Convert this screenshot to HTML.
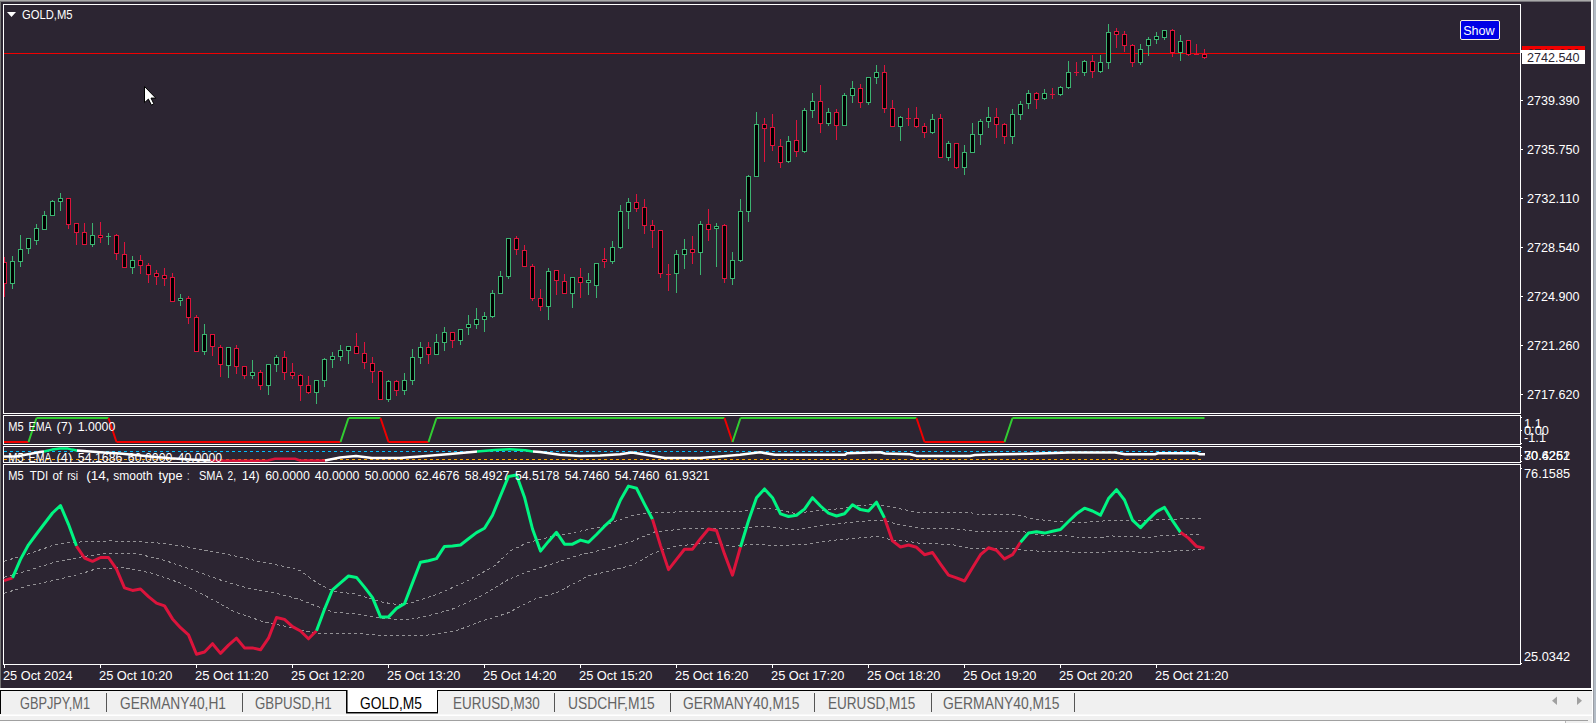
<!DOCTYPE html>
<html><head><meta charset="utf-8"><title>GOLD,M5</title>
<style>
html,body{margin:0;padding:0}
body{width:1596px;height:723px;overflow:hidden;background:#f0f0f0;position:relative;font-family:"Liberation Sans","DejaVu Sans",sans-serif}
.a{position:absolute}
#chart{left:0;top:0;width:1596px;height:688px;background:#2c2532}
svg{position:absolute;left:0;top:0}
svg text{font-family:"Liberation Sans","DejaVu Sans",sans-serif;font-size:12.75px;fill:#fff}
.tab{position:absolute;top:691px;height:23px;line-height:23px;font-size:16.2px;color:#636363;white-space:nowrap}
.tab span{display:inline-block;transform-origin:0 50%}
.sep{position:absolute;top:693px;width:1px;height:19px;background:#555}
</style></head><body>
<div id="chart" class="a"></div>

<svg width="1596" height="723" viewBox="0 0 1596 723">
<rect x="0" y="0" width="1593" height="1" fill="#a9a9a9"/>
<rect x="0" y="1" width="1591" height="1" fill="#77757a"/>
<rect x="0" y="1" width="1" height="690" fill="#727272"/>
<rect x="1591" y="0" width="2" height="723" fill="#fff"/>
<rect x="1593" y="0" width="1" height="723" fill="#9a9ea5"/>
<rect x="1594" y="0" width="2" height="723" fill="#b4bcc6"/>
<rect x="3" y="4" width="1518" height="1" fill="#fff"/>
<rect x="3" y="413" width="1518" height="1" fill="#fff"/>
<rect x="3" y="415" width="1518" height="1" fill="#fff"/>
<rect x="3" y="444" width="1518" height="1" fill="#fff"/>
<rect x="3" y="446" width="1518" height="1" fill="#fff"/>
<rect x="3" y="462" width="1518" height="1" fill="#fff"/>
<rect x="3" y="464" width="1518" height="1" fill="#fff"/>
<rect x="3" y="664" width="1518" height="1" fill="#fff"/>
<rect x="3" y="4" width="1" height="410" fill="#fff"/>
<rect x="3" y="415" width="1" height="30" fill="#fff"/>
<rect x="3" y="446" width="1" height="17" fill="#fff"/>
<rect x="3" y="464" width="1" height="201" fill="#fff"/>
<rect x="1520" y="4" width="1" height="410" fill="#fff"/>
<rect x="1520" y="415" width="1" height="30" fill="#fff"/>
<rect x="1520" y="446" width="1" height="17" fill="#fff"/>
<rect x="1520" y="464" width="1" height="201" fill="#fff"/>
<rect x="4" y="53" width="1516" height="1" fill="#f00000"/>
<g stroke-width="1" fill="#000">
<path clip-path="url(#cl)" stroke="#dc143c" d="M4.5 257V262M4.5 284V297" fill="none"/>
<rect clip-path="url(#cl)" stroke="#dc143c" x="2.5" y="262.5" width="4" height="21"/>
<path stroke="#3cb371" d="M12.5 256V261M12.5 284V289" fill="none"/>
<rect stroke="#3cb371" x="10.5" y="261.5" width="4" height="22"/>
<path stroke="#3cb371" d="M20.5 235V249M20.5 262V267" fill="none"/>
<rect stroke="#3cb371" x="18.5" y="249.5" width="4" height="12"/>
<path stroke="#3cb371" d="M28.5 238V238M28.5 249V254" fill="none"/>
<rect stroke="#3cb371" x="26.5" y="238.5" width="4" height="10"/>
<path stroke="#3cb371" d="M36.5 224V228M36.5 241V245" fill="none"/>
<rect stroke="#3cb371" x="34.5" y="228.5" width="4" height="12"/>
<path stroke="#3cb371" d="M44.5 211V215M44.5 230V230" fill="none"/>
<rect stroke="#3cb371" x="42.5" y="215.5" width="4" height="14"/>
<path stroke="#3cb371" d="M52.5 200V201M52.5 216V216" fill="none"/>
<rect stroke="#3cb371" x="50.5" y="201.5" width="4" height="14"/>
<path stroke="#3cb371" d="M60.5 193V198M60.5 202V211" fill="none"/>
<rect stroke="#3cb371" x="58.5" y="198.5" width="4" height="3"/>
<path stroke="#dc143c" d="M68.5 198V198M68.5 225V229" fill="none"/>
<rect stroke="#dc143c" x="66.5" y="198.5" width="4" height="26"/>
<path stroke="#dc143c" d="M76.5 223V223M76.5 233V245" fill="none"/>
<rect stroke="#dc143c" x="74.5" y="223.5" width="4" height="9"/>
<path stroke="#dc143c" d="M84.5 223V232M84.5 245V245" fill="none"/>
<rect stroke="#dc143c" x="82.5" y="232.5" width="4" height="12"/>
<path stroke="#3cb371" d="M92.5 223V235M92.5 245V247" fill="none"/>
<rect stroke="#3cb371" x="90.5" y="235.5" width="4" height="9"/>
<path stroke="#dc143c" d="M100.5 222V235M100.5 238V243" fill="none"/>
<rect stroke="#dc143c" x="98.5" y="235.5" width="4" height="2"/>
<path stroke="#3cb371" d="M108.5 233V236M108.5 237V245" fill="none"/>
<rect x="106.0" y="236" width="5" height="1" fill="#3cb371" stroke="none"/>
<path stroke="#dc143c" d="M116.5 234V235M116.5 254V260" fill="none"/>
<rect stroke="#dc143c" x="114.5" y="235.5" width="4" height="18"/>
<path stroke="#dc143c" d="M124.5 242V254M124.5 268V268" fill="none"/>
<rect stroke="#dc143c" x="122.5" y="254.5" width="4" height="13"/>
<path stroke="#3cb371" d="M132.5 256V260M132.5 268V274" fill="none"/>
<rect stroke="#3cb371" x="130.5" y="260.5" width="4" height="7"/>
<path stroke="#dc143c" d="M140.5 255V260M140.5 266V274" fill="none"/>
<rect stroke="#dc143c" x="138.5" y="260.5" width="4" height="5"/>
<path stroke="#dc143c" d="M148.5 263V265M148.5 275V283" fill="none"/>
<rect stroke="#dc143c" x="146.5" y="265.5" width="4" height="9"/>
<path stroke="#dc143c" d="M156.5 270V273M156.5 277V285" fill="none"/>
<rect stroke="#dc143c" x="154.5" y="273.5" width="4" height="3"/>
<path stroke="#dc143c" d="M164.5 268V275M164.5 279V286" fill="none"/>
<rect stroke="#dc143c" x="162.5" y="275.5" width="4" height="3"/>
<path stroke="#dc143c" d="M172.5 273V277M172.5 302V302" fill="none"/>
<rect stroke="#dc143c" x="170.5" y="277.5" width="4" height="24"/>
<path stroke="#3cb371" d="M180.5 294V298M180.5 301V306" fill="none"/>
<rect stroke="#3cb371" x="178.5" y="298.5" width="4" height="2"/>
<path stroke="#dc143c" d="M188.5 296V298M188.5 318V324" fill="none"/>
<rect stroke="#dc143c" x="186.5" y="298.5" width="4" height="19"/>
<path stroke="#dc143c" d="M196.5 315V317M196.5 352V352" fill="none"/>
<rect stroke="#dc143c" x="194.5" y="317.5" width="4" height="34"/>
<path stroke="#3cb371" d="M204.5 324V334M204.5 352V355" fill="none"/>
<rect stroke="#3cb371" x="202.5" y="334.5" width="4" height="17"/>
<path stroke="#dc143c" d="M212.5 334V334M212.5 347V356" fill="none"/>
<rect stroke="#dc143c" x="210.5" y="334.5" width="4" height="12"/>
<path stroke="#dc143c" d="M220.5 345V347M220.5 365V377" fill="none"/>
<rect stroke="#dc143c" x="218.5" y="347.5" width="4" height="17"/>
<path stroke="#3cb371" d="M228.5 347V347M228.5 366V378" fill="none"/>
<rect stroke="#3cb371" x="226.5" y="347.5" width="4" height="18"/>
<path stroke="#dc143c" d="M236.5 345V348M236.5 367V374" fill="none"/>
<rect stroke="#dc143c" x="234.5" y="348.5" width="4" height="18"/>
<path stroke="#dc143c" d="M244.5 366V366M244.5 376V379" fill="none"/>
<rect stroke="#dc143c" x="242.5" y="366.5" width="4" height="9"/>
<path stroke="#3cb371" d="M252.5 360V372M252.5 376V379" fill="none"/>
<rect stroke="#3cb371" x="250.5" y="372.5" width="4" height="3"/>
<path stroke="#dc143c" d="M260.5 370V372M260.5 386V390" fill="none"/>
<rect stroke="#dc143c" x="258.5" y="372.5" width="4" height="13"/>
<path stroke="#3cb371" d="M268.5 364V364M268.5 386V395" fill="none"/>
<rect stroke="#3cb371" x="266.5" y="364.5" width="4" height="21"/>
<path stroke="#3cb371" d="M276.5 355V357M276.5 365V372" fill="none"/>
<rect stroke="#3cb371" x="274.5" y="357.5" width="4" height="7"/>
<path stroke="#dc143c" d="M284.5 351V357M284.5 373V380" fill="none"/>
<rect stroke="#dc143c" x="282.5" y="357.5" width="4" height="15"/>
<path stroke="#dc143c" d="M292.5 363V372M292.5 376V379" fill="none"/>
<rect stroke="#dc143c" x="290.5" y="372.5" width="4" height="3"/>
<path stroke="#dc143c" d="M300.5 374V375M300.5 386V401" fill="none"/>
<rect stroke="#dc143c" x="298.5" y="375.5" width="4" height="10"/>
<path stroke="#dc143c" d="M308.5 376V385M308.5 393V394" fill="none"/>
<rect stroke="#dc143c" x="306.5" y="385.5" width="4" height="7"/>
<path stroke="#3cb371" d="M316.5 380V380M316.5 393V404" fill="none"/>
<rect stroke="#3cb371" x="314.5" y="380.5" width="4" height="12"/>
<path stroke="#3cb371" d="M324.5 358V359M324.5 381V387" fill="none"/>
<rect stroke="#3cb371" x="322.5" y="359.5" width="4" height="21"/>
<path stroke="#3cb371" d="M332.5 352V356M332.5 360V368" fill="none"/>
<rect stroke="#3cb371" x="330.5" y="356.5" width="4" height="3"/>
<path stroke="#3cb371" d="M340.5 345V350M340.5 357V361" fill="none"/>
<rect stroke="#3cb371" x="338.5" y="350.5" width="4" height="6"/>
<path stroke="#3cb371" d="M348.5 346V346M348.5 351V364" fill="none"/>
<rect stroke="#3cb371" x="346.5" y="346.5" width="4" height="4"/>
<path stroke="#dc143c" d="M356.5 333V346M356.5 354V354" fill="none"/>
<rect stroke="#dc143c" x="354.5" y="346.5" width="4" height="7"/>
<path stroke="#dc143c" d="M364.5 342V353M364.5 363V369" fill="none"/>
<rect stroke="#dc143c" x="362.5" y="353.5" width="4" height="9"/>
<path stroke="#dc143c" d="M372.5 357V363M372.5 372V383" fill="none"/>
<rect stroke="#dc143c" x="370.5" y="363.5" width="4" height="8"/>
<path stroke="#dc143c" d="M380.5 370V371M380.5 400V400" fill="none"/>
<rect stroke="#dc143c" x="378.5" y="371.5" width="4" height="28"/>
<path stroke="#3cb371" d="M388.5 380V381M388.5 400V402" fill="none"/>
<rect stroke="#3cb371" x="386.5" y="381.5" width="4" height="18"/>
<path stroke="#dc143c" d="M396.5 380V381M396.5 391V396" fill="none"/>
<rect stroke="#dc143c" x="394.5" y="381.5" width="4" height="9"/>
<path stroke="#3cb371" d="M404.5 373V380M404.5 391V395" fill="none"/>
<rect stroke="#3cb371" x="402.5" y="380.5" width="4" height="10"/>
<path stroke="#3cb371" d="M412.5 349V357M412.5 381V385" fill="none"/>
<rect stroke="#3cb371" x="410.5" y="357.5" width="4" height="23"/>
<path stroke="#3cb371" d="M420.5 342V347M420.5 358V364" fill="none"/>
<rect stroke="#3cb371" x="418.5" y="347.5" width="4" height="10"/>
<path stroke="#dc143c" d="M428.5 342V347M428.5 355V364" fill="none"/>
<rect stroke="#dc143c" x="426.5" y="347.5" width="4" height="7"/>
<path stroke="#3cb371" d="M436.5 334V342M436.5 355V355" fill="none"/>
<rect stroke="#3cb371" x="434.5" y="342.5" width="4" height="12"/>
<path stroke="#3cb371" d="M444.5 327V332M444.5 343V351" fill="none"/>
<rect stroke="#3cb371" x="442.5" y="332.5" width="4" height="10"/>
<path stroke="#dc143c" d="M452.5 332V332M452.5 341V348" fill="none"/>
<rect stroke="#dc143c" x="450.5" y="332.5" width="4" height="8"/>
<path stroke="#3cb371" d="M460.5 329V329M460.5 341V345" fill="none"/>
<rect stroke="#3cb371" x="458.5" y="329.5" width="4" height="11"/>
<path stroke="#3cb371" d="M468.5 315V324M468.5 328V335" fill="none"/>
<rect stroke="#3cb371" x="466.5" y="324.5" width="4" height="3"/>
<path stroke="#3cb371" d="M476.5 308V319M476.5 325V329" fill="none"/>
<rect stroke="#3cb371" x="474.5" y="319.5" width="4" height="5"/>
<path stroke="#3cb371" d="M484.5 312V316M484.5 320V332" fill="none"/>
<rect stroke="#3cb371" x="482.5" y="316.5" width="4" height="3"/>
<path stroke="#3cb371" d="M492.5 290V293M492.5 317V318" fill="none"/>
<rect stroke="#3cb371" x="490.5" y="293.5" width="4" height="23"/>
<path stroke="#3cb371" d="M500.5 271V276M500.5 294V294" fill="none"/>
<rect stroke="#3cb371" x="498.5" y="276.5" width="4" height="17"/>
<path stroke="#3cb371" d="M508.5 238V238M508.5 277V279" fill="none"/>
<rect stroke="#3cb371" x="506.5" y="238.5" width="4" height="38"/>
<path stroke="#dc143c" d="M516.5 236V238M516.5 250V255" fill="none"/>
<rect stroke="#dc143c" x="514.5" y="238.5" width="4" height="11"/>
<path stroke="#dc143c" d="M524.5 245V250M524.5 267V267" fill="none"/>
<rect stroke="#dc143c" x="522.5" y="250.5" width="4" height="16"/>
<path stroke="#dc143c" d="M532.5 264V266M532.5 299V301" fill="none"/>
<rect stroke="#dc143c" x="530.5" y="266.5" width="4" height="32"/>
<path stroke="#dc143c" d="M540.5 289V298M540.5 307V311" fill="none"/>
<rect stroke="#dc143c" x="538.5" y="298.5" width="4" height="8"/>
<path stroke="#3cb371" d="M548.5 268V271M548.5 307V320" fill="none"/>
<rect stroke="#3cb371" x="546.5" y="271.5" width="4" height="35"/>
<path stroke="#dc143c" d="M556.5 270V270M556.5 281V295" fill="none"/>
<rect stroke="#dc143c" x="554.5" y="270.5" width="4" height="10"/>
<path stroke="#dc143c" d="M564.5 274V281M564.5 294V294" fill="none"/>
<rect stroke="#dc143c" x="562.5" y="281.5" width="4" height="12"/>
<path stroke="#3cb371" d="M572.5 277V277M572.5 294V308" fill="none"/>
<rect stroke="#3cb371" x="570.5" y="277.5" width="4" height="16"/>
<path stroke="#dc143c" d="M580.5 268V277M580.5 283V298" fill="none"/>
<rect stroke="#dc143c" x="578.5" y="277.5" width="4" height="5"/>
<path stroke="#3cb371" d="M588.5 273V280M588.5 283V295" fill="none"/>
<rect stroke="#3cb371" x="586.5" y="280.5" width="4" height="2"/>
<path stroke="#3cb371" d="M596.5 263V263M596.5 286V298" fill="none"/>
<rect stroke="#3cb371" x="594.5" y="263.5" width="4" height="22"/>
<path stroke="#dc143c" d="M604.5 248V259M604.5 262V268" fill="none"/>
<rect stroke="#dc143c" x="602.5" y="259.5" width="4" height="2"/>
<path stroke="#3cb371" d="M612.5 241V247M612.5 262V264" fill="none"/>
<rect stroke="#3cb371" x="610.5" y="247.5" width="4" height="14"/>
<path stroke="#3cb371" d="M620.5 205V211M620.5 248V249" fill="none"/>
<rect stroke="#3cb371" x="618.5" y="211.5" width="4" height="36"/>
<path stroke="#3cb371" d="M628.5 198V202M628.5 212V229" fill="none"/>
<rect stroke="#3cb371" x="626.5" y="202.5" width="4" height="9"/>
<path stroke="#dc143c" d="M636.5 194V202M636.5 209V212" fill="none"/>
<rect stroke="#dc143c" x="634.5" y="202.5" width="4" height="6"/>
<path stroke="#dc143c" d="M644.5 199V207M644.5 226V234" fill="none"/>
<rect stroke="#dc143c" x="642.5" y="207.5" width="4" height="18"/>
<path stroke="#dc143c" d="M652.5 220V225M652.5 231V248" fill="none"/>
<rect stroke="#dc143c" x="650.5" y="225.5" width="4" height="5"/>
<path stroke="#dc143c" d="M660.5 230V230M660.5 274V278" fill="none"/>
<rect stroke="#dc143c" x="658.5" y="230.5" width="4" height="43"/>
<path stroke="#dc143c" d="M668.5 264V274M668.5 275V291" fill="none"/>
<rect x="666.0" y="274" width="5" height="1" fill="#dc143c" stroke="none"/>
<path stroke="#3cb371" d="M676.5 250V254M676.5 274V293" fill="none"/>
<rect stroke="#3cb371" x="674.5" y="254.5" width="4" height="19"/>
<path stroke="#3cb371" d="M684.5 239V249M684.5 255V269" fill="none"/>
<rect stroke="#3cb371" x="682.5" y="249.5" width="4" height="5"/>
<path stroke="#dc143c" d="M692.5 236V249M692.5 253V264" fill="none"/>
<rect stroke="#dc143c" x="690.5" y="249.5" width="4" height="3"/>
<path stroke="#3cb371" d="M700.5 221V224M700.5 253V275" fill="none"/>
<rect stroke="#3cb371" x="698.5" y="224.5" width="4" height="28"/>
<path stroke="#dc143c" d="M708.5 209V224M708.5 230V241" fill="none"/>
<rect stroke="#dc143c" x="706.5" y="224.5" width="4" height="5"/>
<path stroke="#3cb371" d="M716.5 223V226M716.5 229V267" fill="none"/>
<rect stroke="#3cb371" x="714.5" y="226.5" width="4" height="2"/>
<path stroke="#dc143c" d="M724.5 224V225M724.5 279V283" fill="none"/>
<rect stroke="#dc143c" x="722.5" y="225.5" width="4" height="53"/>
<path stroke="#3cb371" d="M732.5 252V260M732.5 279V285" fill="none"/>
<rect stroke="#3cb371" x="730.5" y="260.5" width="4" height="18"/>
<path stroke="#3cb371" d="M740.5 199V211M740.5 261V262" fill="none"/>
<rect stroke="#3cb371" x="738.5" y="211.5" width="4" height="49"/>
<path stroke="#3cb371" d="M748.5 175V176M748.5 212V222" fill="none"/>
<rect stroke="#3cb371" x="746.5" y="176.5" width="4" height="35"/>
<path stroke="#3cb371" d="M756.5 112V124M756.5 177V177" fill="none"/>
<rect stroke="#3cb371" x="754.5" y="124.5" width="4" height="52"/>
<path stroke="#dc143c" d="M764.5 118V124M764.5 129V162" fill="none"/>
<rect stroke="#dc143c" x="762.5" y="124.5" width="4" height="4"/>
<path stroke="#dc143c" d="M772.5 114V127M772.5 146V151" fill="none"/>
<rect stroke="#dc143c" x="770.5" y="127.5" width="4" height="18"/>
<path stroke="#dc143c" d="M780.5 139V146M780.5 163V168" fill="none"/>
<rect stroke="#dc143c" x="778.5" y="146.5" width="4" height="16"/>
<path stroke="#3cb371" d="M788.5 136V141M788.5 162V163" fill="none"/>
<rect stroke="#3cb371" x="786.5" y="141.5" width="4" height="20"/>
<path stroke="#dc143c" d="M796.5 120V140M796.5 152V157" fill="none"/>
<rect stroke="#dc143c" x="794.5" y="140.5" width="4" height="11"/>
<path stroke="#3cb371" d="M804.5 108V110M804.5 152V153" fill="none"/>
<rect stroke="#3cb371" x="802.5" y="110.5" width="4" height="41"/>
<path stroke="#3cb371" d="M812.5 93V101M812.5 111V118" fill="none"/>
<rect stroke="#3cb371" x="810.5" y="101.5" width="4" height="9"/>
<path stroke="#dc143c" d="M820.5 85V101M820.5 124V133" fill="none"/>
<rect stroke="#dc143c" x="818.5" y="101.5" width="4" height="22"/>
<path stroke="#3cb371" d="M828.5 108V112M828.5 124V126" fill="none"/>
<rect stroke="#3cb371" x="826.5" y="112.5" width="4" height="11"/>
<path stroke="#dc143c" d="M836.5 109V112M836.5 126V140" fill="none"/>
<rect stroke="#dc143c" x="834.5" y="112.5" width="4" height="13"/>
<path stroke="#3cb371" d="M844.5 93V95M844.5 126V126" fill="none"/>
<rect stroke="#3cb371" x="842.5" y="95.5" width="4" height="30"/>
<path stroke="#3cb371" d="M852.5 81V88M852.5 96V103" fill="none"/>
<rect stroke="#3cb371" x="850.5" y="88.5" width="4" height="7"/>
<path stroke="#dc143c" d="M860.5 84V88M860.5 103V108" fill="none"/>
<rect stroke="#dc143c" x="858.5" y="88.5" width="4" height="14"/>
<path stroke="#3cb371" d="M868.5 77V77M868.5 103V105" fill="none"/>
<rect stroke="#3cb371" x="866.5" y="77.5" width="4" height="25"/>
<path stroke="#3cb371" d="M876.5 65V72M876.5 78V84" fill="none"/>
<rect stroke="#3cb371" x="874.5" y="72.5" width="4" height="5"/>
<path stroke="#dc143c" d="M884.5 65V72M884.5 109V113" fill="none"/>
<rect stroke="#dc143c" x="882.5" y="72.5" width="4" height="36"/>
<path stroke="#dc143c" d="M892.5 100V108M892.5 127V127" fill="none"/>
<rect stroke="#dc143c" x="890.5" y="108.5" width="4" height="18"/>
<path stroke="#3cb371" d="M900.5 116V117M900.5 127V141" fill="none"/>
<rect stroke="#3cb371" x="898.5" y="117.5" width="4" height="9"/>
<path stroke="#dc143c" d="M908.5 108V118M908.5 119V126" fill="none"/>
<rect x="906.0" y="118" width="5" height="1" fill="#dc143c" stroke="none"/>
<path stroke="#dc143c" d="M916.5 107V118M916.5 127V128" fill="none"/>
<rect stroke="#dc143c" x="914.5" y="118.5" width="4" height="8"/>
<path stroke="#dc143c" d="M924.5 123V126M924.5 133V138" fill="none"/>
<rect stroke="#dc143c" x="922.5" y="126.5" width="4" height="6"/>
<path stroke="#3cb371" d="M932.5 114V119M932.5 133V134" fill="none"/>
<rect stroke="#3cb371" x="930.5" y="119.5" width="4" height="13"/>
<path stroke="#dc143c" d="M940.5 114V118M940.5 158V158" fill="none"/>
<rect stroke="#dc143c" x="938.5" y="118.5" width="4" height="39"/>
<path stroke="#3cb371" d="M948.5 141V143M948.5 158V161" fill="none"/>
<rect stroke="#3cb371" x="946.5" y="143.5" width="4" height="14"/>
<path stroke="#dc143c" d="M956.5 143V143M956.5 168V169" fill="none"/>
<rect stroke="#dc143c" x="954.5" y="143.5" width="4" height="24"/>
<path stroke="#3cb371" d="M964.5 145V152M964.5 168V175" fill="none"/>
<rect stroke="#3cb371" x="962.5" y="152.5" width="4" height="15"/>
<path stroke="#3cb371" d="M972.5 123V134M972.5 153V153" fill="none"/>
<rect stroke="#3cb371" x="970.5" y="134.5" width="4" height="18"/>
<path stroke="#3cb371" d="M980.5 119V121M980.5 135V145" fill="none"/>
<rect stroke="#3cb371" x="978.5" y="121.5" width="4" height="13"/>
<path stroke="#3cb371" d="M988.5 107V117M988.5 122V128" fill="none"/>
<rect stroke="#3cb371" x="986.5" y="117.5" width="4" height="4"/>
<path stroke="#dc143c" d="M996.5 108V117M996.5 125V138" fill="none"/>
<rect stroke="#dc143c" x="994.5" y="117.5" width="4" height="7"/>
<path stroke="#dc143c" d="M1004.5 123V124M1004.5 137V144" fill="none"/>
<rect stroke="#dc143c" x="1002.5" y="124.5" width="4" height="12"/>
<path stroke="#3cb371" d="M1012.5 109V114M1012.5 137V144" fill="none"/>
<rect stroke="#3cb371" x="1010.5" y="114.5" width="4" height="22"/>
<path stroke="#3cb371" d="M1020.5 101V104M1020.5 115V120" fill="none"/>
<rect stroke="#3cb371" x="1018.5" y="104.5" width="4" height="10"/>
<path stroke="#3cb371" d="M1028.5 90V93M1028.5 104V109" fill="none"/>
<rect stroke="#3cb371" x="1026.5" y="93.5" width="4" height="10"/>
<path stroke="#dc143c" d="M1036.5 92V93M1036.5 100V109" fill="none"/>
<rect stroke="#dc143c" x="1034.5" y="93.5" width="4" height="6"/>
<path stroke="#3cb371" d="M1044.5 89V93M1044.5 99V100" fill="none"/>
<rect stroke="#3cb371" x="1042.5" y="93.5" width="4" height="5"/>
<path stroke="#dc143c" d="M1052.5 88V94M1052.5 95V99" fill="none"/>
<rect x="1050.0" y="94" width="5" height="1" fill="#dc143c" stroke="none"/>
<path stroke="#3cb371" d="M1060.5 86V87M1060.5 95V96" fill="none"/>
<rect stroke="#3cb371" x="1058.5" y="87.5" width="4" height="7"/>
<path stroke="#3cb371" d="M1068.5 61V72M1068.5 88V89" fill="none"/>
<rect stroke="#3cb371" x="1066.5" y="72.5" width="4" height="15"/>
<path stroke="#dc143c" d="M1076.5 62V72M1076.5 73V76" fill="none"/>
<rect x="1074.0" y="72" width="5" height="1" fill="#dc143c" stroke="none"/>
<path stroke="#3cb371" d="M1084.5 60V61M1084.5 73V76" fill="none"/>
<rect stroke="#3cb371" x="1082.5" y="61.5" width="4" height="11"/>
<path stroke="#dc143c" d="M1092.5 55V61M1092.5 72V78" fill="none"/>
<rect stroke="#dc143c" x="1090.5" y="61.5" width="4" height="10"/>
<path stroke="#3cb371" d="M1100.5 55V62M1100.5 72V73" fill="none"/>
<rect stroke="#3cb371" x="1098.5" y="62.5" width="4" height="9"/>
<path stroke="#3cb371" d="M1108.5 24V32M1108.5 63V69" fill="none"/>
<rect stroke="#3cb371" x="1106.5" y="32.5" width="4" height="30"/>
<path stroke="#dc143c" d="M1116.5 28V31M1116.5 35V48" fill="none"/>
<rect stroke="#dc143c" x="1114.5" y="31.5" width="4" height="3"/>
<path stroke="#dc143c" d="M1124.5 31V34M1124.5 46V52" fill="none"/>
<rect stroke="#dc143c" x="1122.5" y="34.5" width="4" height="11"/>
<path stroke="#dc143c" d="M1132.5 44V45M1132.5 63V67" fill="none"/>
<rect stroke="#dc143c" x="1130.5" y="45.5" width="4" height="17"/>
<path stroke="#3cb371" d="M1140.5 44V49M1140.5 63V65" fill="none"/>
<rect stroke="#3cb371" x="1138.5" y="49.5" width="4" height="13"/>
<path stroke="#3cb371" d="M1148.5 37V39M1148.5 46V56" fill="none"/>
<rect stroke="#3cb371" x="1146.5" y="39.5" width="4" height="6"/>
<path stroke="#3cb371" d="M1156.5 32V36M1156.5 40V44" fill="none"/>
<rect stroke="#3cb371" x="1154.5" y="36.5" width="4" height="3"/>
<path stroke="#3cb371" d="M1164.5 30V30M1164.5 38V40" fill="none"/>
<rect stroke="#3cb371" x="1162.5" y="30.5" width="4" height="7"/>
<path stroke="#dc143c" d="M1172.5 29V30M1172.5 53V57" fill="none"/>
<rect stroke="#dc143c" x="1170.5" y="30.5" width="4" height="22"/>
<path stroke="#3cb371" d="M1180.5 35V41M1180.5 53V61" fill="none"/>
<rect stroke="#3cb371" x="1178.5" y="41.5" width="4" height="11"/>
<path stroke="#dc143c" d="M1188.5 40V40M1188.5 55V56" fill="none"/>
<rect stroke="#dc143c" x="1186.5" y="40.5" width="4" height="14"/>
<path stroke="#dc143c" d="M1196.5 44V54M1196.5 55V55" fill="none"/>
<rect x="1194.0" y="54" width="5" height="1" fill="#dc143c" stroke="none"/>
<path stroke="#dc143c" d="M1204.5 49V54M1204.5 58V59" fill="none"/>
<rect stroke="#dc143c" x="1202.5" y="54.5" width="4" height="3"/>
</g>
<defs><clipPath id="cl"><rect x="4" y="5" width="1516" height="408"/></clipPath></defs>
<path d="M4 442H28.5" stroke="#f00000" stroke-width="2" fill="none"/>
<path d="M28.5 442L36.5 418" stroke="#32cd32" stroke-width="2" fill="none"/>
<path d="M36.5 418H108.5" stroke="#32cd32" stroke-width="2" fill="none"/>
<path d="M108.5 418L116.5 442" stroke="#f00000" stroke-width="2" fill="none"/>
<path d="M116.5 442H340.5" stroke="#f00000" stroke-width="2" fill="none"/>
<path d="M340.5 442L348.5 418" stroke="#32cd32" stroke-width="2" fill="none"/>
<path d="M348.5 418H380.5" stroke="#32cd32" stroke-width="2" fill="none"/>
<path d="M380.5 418L388.5 442" stroke="#f00000" stroke-width="2" fill="none"/>
<path d="M388.5 442H428.5" stroke="#f00000" stroke-width="2" fill="none"/>
<path d="M428.5 442L436.5 418" stroke="#32cd32" stroke-width="2" fill="none"/>
<path d="M436.5 418H724.5" stroke="#32cd32" stroke-width="2" fill="none"/>
<path d="M724.5 418L732.5 442" stroke="#f00000" stroke-width="2" fill="none"/>
<path d="M732.5 442L740.5 418" stroke="#32cd32" stroke-width="2" fill="none"/>
<path d="M740.5 418H916.5" stroke="#32cd32" stroke-width="2" fill="none"/>
<path d="M916.5 418L924.5 442" stroke="#f00000" stroke-width="2" fill="none"/>
<path d="M924.5 442H1004.5" stroke="#f00000" stroke-width="2" fill="none"/>
<path d="M1004.5 442L1012.5 418" stroke="#32cd32" stroke-width="2" fill="none"/>
<path d="M1012.5 418H1204.5" stroke="#32cd32" stroke-width="2" fill="none"/>
<path d="M4 451.5H1202" stroke="#00bfff" stroke-width="1" stroke-dasharray="3 3" fill="none"/>
<path d="M4 459.5H1202" stroke="#ffa500" stroke-width="1" stroke-dasharray="3 3" fill="none"/>
<path d="M4.0 456.5 L16.0 456.5 L24.0 455.0 L32.0 453.5 L40.0 452.0 L44.0 451.5" stroke="#fff" stroke-width="2.5" fill="none" stroke-linejoin="round"/>
<path d="M44.0 451.5 L52.0 449.6 L60.0 448.6 L68.0 448.6 L72.0 449.6 L77.0 450.5" stroke="#00f582" stroke-width="2.5" fill="none" stroke-linejoin="round"/>
<path d="M77.0 450.5 L100.0 452.3 L120.0 453.6 L150.0 456.5 L170.0 458.3 L190.0 459.6 L210.0 460.5" stroke="#fff" stroke-width="2.5" fill="none" stroke-linejoin="round"/>
<path d="M210.0 460.5 L250.0 460.8 L268.0 460.5 L275.0 458.8 L295.0 458.8 L300.0 460.5 L325.0 460.5" stroke="#dc143c" stroke-width="2.5" fill="none" stroke-linejoin="round"/>
<path d="M325.0 460.5 L340.0 457.6 L356.0 456.0 L372.0 458.0 L400.0 458.0 L420.0 456.4 L450.0 453.9 L475.0 451.7 L477.0 451.5" stroke="#fff" stroke-width="2.5" fill="none" stroke-linejoin="round"/>
<path d="M477.0 451.5 L495.0 450.0 L510.0 449.2 L525.0 450.2 L533.0 451.5" stroke="#00f582" stroke-width="2.5" fill="none" stroke-linejoin="round"/>
<path d="M533.0 451.5 L540.0 452.0 L560.0 454.8 L580.0 456.0 L600.0 455.5 L620.0 454.2 L632.0 452.6 L650.0 455.4 L665.0 458.0 L700.0 458.0 L720.0 456.4 L740.0 454.8 L760.0 452.3 L775.0 454.8 L800.0 454.8 L845.0 454.8 L847.0 453.2 L880.0 452.3 L885.0 453.5 L910.0 454.2 L917.0 456.0 L970.0 456.0 L975.0 455.0 L990.0 454.5 L1030.0 453.7 L1070.0 452.6 L1115.0 452.6 L1125.0 454.2 L1155.0 454.2 L1158.0 453.2 L1197.0 453.2 L1200.0 454.2 L1205.0 454.2" stroke="#fff" stroke-width="2.5" fill="none" stroke-linejoin="round"/>
<path d="M4.0 561.3 L28.0 553.9 L55.0 544.8 L72.0 542.3 L110.0 540.9 L152.0 542.3 L180.0 545.6 L221.0 553.0 L263.0 562.2 L290.0 567.7 L300.0 570.5 L317.0 582.9 L333.0 591.2 L355.0 594.0 L383.0 602.3 L397.0 604.5 L411.0 602.8 L438.0 594.0 L466.0 581.5 L494.0 566.3 L510.0 551.1 L527.0 542.8 L549.0 537.3 L577.0 531.8 L600.0 527.1 L617.0 520.7 L633.0 515.2 L653.0 512.4 L697.0 511.6 L738.0 511.6 L755.0 508.8 L771.0 508.2 L794.0 513.2 L816.0 511.0 L838.0 508.8 L860.0 505.5 L877.0 504.1 L890.0 506.9 L900.0 508.8 L917.0 512.4 L969.0 512.4 L980.0 514.6 L1016.0 514.6 L1033.0 518.8 L1055.0 521.5 L1080.0 522.6 L1107.0 520.7 L1149.0 520.7 L1163.0 519.3 L1201.0 518.5" stroke="#939195" stroke-width="1" fill="none" stroke-linejoin="round" stroke-dasharray="3 3" shape-rendering="crispEdges"/>
<path d="M4.0 577.4 L28.0 570.5 L55.0 562.2 L83.0 556.6 L110.0 553.0 L138.0 553.9 L166.0 560.8 L194.0 570.5 L221.0 580.2 L249.0 588.4 L277.0 593.4 L300.0 599.5 L317.0 606.4 L333.0 612.0 L355.0 613.9 L383.0 618.3 L405.0 620.2 L424.0 616.9 L452.0 609.2 L480.0 596.7 L507.0 580.2 L527.0 571.9 L549.0 564.9 L577.0 555.8 L600.0 550.3 L617.0 545.6 L633.0 540.9 L655.0 531.8 L683.0 529.0 L711.0 528.2 L738.0 528.2 L766.0 526.2 L794.0 529.8 L821.0 525.4 L849.0 522.6 L877.0 520.1 L890.0 522.1 L900.0 524.8 L922.0 528.2 L950.0 528.2 L980.0 531.8 L1024.0 531.8 L1044.0 535.9 L1066.0 535.9 L1080.0 537.3 L1102.0 537.3 L1110.0 535.9 L1149.0 537.3 L1163.0 535.3 L1201.0 534.5" stroke="#939195" stroke-width="1" fill="none" stroke-linejoin="round" stroke-dasharray="3 3" shape-rendering="crispEdges"/>
<path d="M4.0 593.4 L28.0 585.7 L55.0 580.2 L83.0 573.2 L97.0 568.5 L124.0 567.7 L152.0 573.2 L180.0 582.9 L207.0 596.7 L235.0 612.0 L263.0 621.6 L290.0 627.2 L300.0 629.9 L317.0 633.2 L355.0 633.2 L383.0 635.5 L424.0 635.5 L455.0 631.3 L480.0 621.6 L507.0 613.3 L535.0 599.0 L557.0 592.6 L588.0 576.0 L600.0 573.2 L617.0 569.1 L633.0 564.9 L655.0 552.5 L675.0 546.4 L711.0 542.3 L733.0 546.4 L752.0 544.2 L780.0 545.6 L807.0 544.2 L835.0 540.1 L877.0 536.5 L893.0 540.1 L900.0 540.1 L922.0 543.6 L950.0 544.2 L969.0 548.3 L1011.0 548.3 L1024.0 550.6 L1066.0 551.9 L1102.0 552.5 L1110.0 551.1 L1149.0 552.5 L1177.0 550.6 L1201.0 549.7" stroke="#939195" stroke-width="1" fill="none" stroke-linejoin="round" stroke-dasharray="3 3" shape-rendering="crispEdges"/>
<path d="M4.0 580.7 L12.5 577.9" stroke="#dc143c" stroke-width="3" fill="none" stroke-linejoin="round"/>
<path d="M12.5 577.9 L20.5 559.4 L28.5 544.8 L36.5 534.0 L44.5 523.5 L52.5 513.0 L60.5 505.5 L68.5 524.3 L76.5 546.1" stroke="#00f582" stroke-width="3" fill="none" stroke-linejoin="round"/>
<path d="M76.5 546.1 L84.5 558.0 L92.5 561.3 L100.5 557.5 L108.5 557.5 L116.5 569.1 L124.5 587.9 L132.5 590.4 L140.5 589.0 L148.5 596.7 L156.5 603.1 L164.5 605.9 L172.5 618.9 L180.5 627.7 L188.5 634.9 L196.5 654.3 L204.5 652.0 L212.5 643.7 L220.5 653.4 L228.5 645.1 L236.5 638.2 L244.5 647.9 L252.5 647.9 L260.5 649.8 L268.5 638.2 L276.5 617.5 L284.5 619.4 L292.5 626.6 L300.5 631.0 L308.5 638.8 L316.5 630.8" stroke="#dc143c" stroke-width="3" fill="none" stroke-linejoin="round"/>
<path d="M316.5 630.8 L324.5 609.2 L332.5 589.8 L340.5 582.9 L348.5 576.0 L356.5 577.4 L364.5 587.1 L372.5 597.6 L380.5 616.9 L388.5 616.9 L396.5 608.4 L404.5 603.7 L412.5 582.9 L420.5 562.2 L428.5 560.8 L436.5 558.6 L444.5 546.4 L452.5 546.1 L460.5 545.0 L468.5 538.7 L476.5 532.6 L484.5 528.2 L492.5 515.2 L500.5 495.8 L508.5 476.4 L516.5 475.1 L524.5 497.2 L532.5 529.0 L540.5 551.1 L548.5 541.4 L556.5 532.3 L564.5 544.2 L572.5 544.2 L580.5 540.1 L588.5 542.3 L596.5 534.5 L604.5 526.2 L612.5 518.8 L620.5 500.0 L628.5 486.1 L636.5 488.3 L644.5 504.1 L652.5 519.3" stroke="#00f582" stroke-width="3" fill="none" stroke-linejoin="round"/>
<path d="M652.5 519.3 L660.5 545.6 L668.5 569.6 L676.5 559.4 L684.5 549.2 L692.5 549.2 L700.5 538.7 L708.5 529.0 L716.5 530.4 L724.5 553.9 L732.5 575.2 L740.5 547.0" stroke="#dc143c" stroke-width="3" fill="none" stroke-linejoin="round"/>
<path d="M740.5 547.0 L748.5 520.7 L756.5 497.7 L764.5 488.9 L772.5 497.7 L780.5 513.8 L788.5 516.5 L796.5 515.2 L804.5 509.1 L812.5 497.7 L820.5 506.0 L828.5 513.2 L836.5 516.0 L844.5 513.8 L852.5 504.7 L860.5 509.6 L868.5 511.0 L876.5 502.2 L884.5 517.9" stroke="#00f582" stroke-width="3" fill="none" stroke-linejoin="round"/>
<path d="M884.5 517.9 L892.5 540.9 L900.5 547.0 L908.5 545.0 L916.5 547.3 L924.5 554.7 L932.5 552.5 L940.5 564.1 L948.5 575.2 L956.5 577.9 L964.5 581.0 L972.5 567.7 L980.5 554.7 L988.5 547.8 L996.5 550.3 L1004.5 558.9 L1012.5 554.7 L1020.5 542.3" stroke="#dc143c" stroke-width="3" fill="none" stroke-linejoin="round"/>
<path d="M1020.5 542.3 L1028.5 533.1 L1036.5 531.8 L1044.5 533.1 L1052.5 531.2 L1060.5 529.5 L1068.5 521.5 L1076.5 513.8 L1084.5 508.2 L1092.5 511.0 L1100.5 515.2 L1108.5 498.6 L1116.5 489.7 L1124.5 500.0 L1132.5 520.1 L1140.5 527.6 L1148.5 519.3 L1156.5 511.6 L1164.5 507.4 L1172.5 520.7 L1180.5 532.3" stroke="#00f582" stroke-width="3" fill="none" stroke-linejoin="round"/>
<path d="M1180.5 532.3 L1188.5 538.1 L1196.5 546.4 L1204.5 548.3" stroke="#dc143c" stroke-width="3" fill="none" stroke-linejoin="round"/>
<rect x="4" y="665" width="1" height="3" fill="#fff"/>
<rect x="100" y="665" width="1" height="3" fill="#fff"/>
<rect x="196" y="665" width="1" height="3" fill="#fff"/>
<rect x="292" y="665" width="1" height="3" fill="#fff"/>
<rect x="388" y="665" width="1" height="3" fill="#fff"/>
<rect x="484" y="665" width="1" height="3" fill="#fff"/>
<rect x="580" y="665" width="1" height="3" fill="#fff"/>
<rect x="676" y="665" width="1" height="3" fill="#fff"/>
<rect x="772" y="665" width="1" height="3" fill="#fff"/>
<rect x="868" y="665" width="1" height="3" fill="#fff"/>
<rect x="964" y="665" width="1" height="3" fill="#fff"/>
<rect x="1060" y="665" width="1" height="3" fill="#fff"/>
<rect x="1156" y="665" width="1" height="3" fill="#fff"/>
<rect x="1521" y="100" width="2" height="1" fill="#fff"/>
<rect x="1521" y="149" width="2" height="1" fill="#fff"/>
<rect x="1521" y="198" width="2" height="1" fill="#fff"/>
<rect x="1521" y="247" width="2" height="1" fill="#fff"/>
<rect x="1521" y="296" width="2" height="1" fill="#fff"/>
<rect x="1521" y="345" width="2" height="1" fill="#fff"/>
<rect x="1521" y="394" width="2" height="1" fill="#fff"/>
<rect x="1521" y="50" width="1" height="3" fill="#fff"/>
<rect x="1521" y="417" width="1" height="1" fill="#fff"/>
<rect x="1521" y="430" width="1" height="1" fill="#fff"/>
<rect x="1521" y="443" width="1" height="1" fill="#fff"/>
<rect x="1521" y="447" width="1" height="1" fill="#fff"/>
<rect x="1521" y="455" width="1" height="1" fill="#fff"/>
<rect x="1521" y="461" width="1" height="1" fill="#fff"/>
<rect x="1521" y="468" width="1" height="1" fill="#fff"/>
<rect x="1521" y="663" width="1" height="1" fill="#fff"/>
<text x="1527" y="104.5" textLength="52.5" lengthAdjust="spacingAndGlyphs">2739.390</text>
<text x="1527" y="153.5" textLength="52.5" lengthAdjust="spacingAndGlyphs">2735.750</text>
<text x="1527" y="202.5" textLength="52.5" lengthAdjust="spacingAndGlyphs">2732.110</text>
<text x="1527" y="251.5" textLength="52.5" lengthAdjust="spacingAndGlyphs">2728.540</text>
<text x="1527" y="300.5" textLength="52.5" lengthAdjust="spacingAndGlyphs">2724.900</text>
<text x="1527" y="349.5" textLength="52.5" lengthAdjust="spacingAndGlyphs">2721.260</text>
<text x="1527" y="398.5" textLength="52.5" lengthAdjust="spacingAndGlyphs">2717.620</text>
<rect x="1522" y="46" width="63" height="4" fill="#f00000"/>
<clipPath id="c3"><rect x="1522" y="46" width="63" height="4"/></clipPath>
<text clip-path="url(#c3)" x="1527" y="58.3" style="fill:#2c2532" textLength="52.5" lengthAdjust="spacingAndGlyphs">2742.680</text>
<rect x="1522" y="50" width="63" height="14" fill="#fff"/>
<text x="1527" y="62" style="fill:#2c2532" textLength="52.5" lengthAdjust="spacingAndGlyphs">2742.540</text>
<text x="1524" y="427.5">1.1</text><text x="1524" y="434.5">0.00</text><text x="1524" y="441.5">-1.1</text>
<text x="1524" y="460">30.6262</text><text x="1524" y="460">70.4251</text>
<text x="1524" y="478">76.1585</text><text x="1524" y="661">25.0342</text>
<text x="3" y="680" textLength="69.5" lengthAdjust="spacingAndGlyphs">25 Oct 2024</text>
<text x="99" y="680" textLength="73.4" lengthAdjust="spacingAndGlyphs">25 Oct 10:20</text>
<text x="195" y="680" textLength="73.4" lengthAdjust="spacingAndGlyphs">25 Oct 11:20</text>
<text x="291" y="680" textLength="73.4" lengthAdjust="spacingAndGlyphs">25 Oct 12:20</text>
<text x="387" y="680" textLength="73.4" lengthAdjust="spacingAndGlyphs">25 Oct 13:20</text>
<text x="483" y="680" textLength="73.4" lengthAdjust="spacingAndGlyphs">25 Oct 14:20</text>
<text x="579" y="680" textLength="73.4" lengthAdjust="spacingAndGlyphs">25 Oct 15:20</text>
<text x="675" y="680" textLength="73.4" lengthAdjust="spacingAndGlyphs">25 Oct 16:20</text>
<text x="771" y="680" textLength="73.4" lengthAdjust="spacingAndGlyphs">25 Oct 17:20</text>
<text x="867" y="680" textLength="73.4" lengthAdjust="spacingAndGlyphs">25 Oct 18:20</text>
<text x="963" y="680" textLength="73.4" lengthAdjust="spacingAndGlyphs">25 Oct 19:20</text>
<text x="1059" y="680" textLength="73.4" lengthAdjust="spacingAndGlyphs">25 Oct 20:20</text>
<text x="1155" y="680" textLength="73.4" lengthAdjust="spacingAndGlyphs">25 Oct 21:20</text>
<path d="M7 12h9l-4.5 5z" fill="#fff"/>
<text x="22" y="18.7" textLength="50.5" lengthAdjust="spacingAndGlyphs">GOLD,M5</text>
<text x="8.2" y="431" textLength="15.4" lengthAdjust="spacingAndGlyphs">M5</text>
<text x="28.6" y="431" textLength="23.0" lengthAdjust="spacingAndGlyphs">EMA</text>
<text x="56.6" y="431" textLength="15.6" lengthAdjust="spacingAndGlyphs">(7)</text>
<text x="77.7" y="431" textLength="37.6" lengthAdjust="spacingAndGlyphs">1.0000</text>
<clipPath id="c2"><rect x="4" y="447" width="1516" height="15"/></clipPath>
<text clip-path="url(#c2)" x="8.2" y="461.5" textLength="15.4" lengthAdjust="spacingAndGlyphs">M5</text>
<text clip-path="url(#c2)" x="28.6" y="461.5" textLength="23.0" lengthAdjust="spacingAndGlyphs">EMA</text>
<text clip-path="url(#c2)" x="56.6" y="461.5" textLength="15.6" lengthAdjust="spacingAndGlyphs">(4)</text>
<text clip-path="url(#c2)" x="77.8" y="461.5" textLength="44.6" lengthAdjust="spacingAndGlyphs">54.1686</text>
<text clip-path="url(#c2)" x="127.8" y="461.5" textLength="44.6" lengthAdjust="spacingAndGlyphs">60.0000</text>
<text clip-path="url(#c2)" x="177.6" y="461.5" textLength="44.6" lengthAdjust="spacingAndGlyphs">40.0000</text>
<text x="8.2" y="480" textLength="15.4" lengthAdjust="spacingAndGlyphs">M5</text>
<text x="29.8" y="480" textLength="18.4" lengthAdjust="spacingAndGlyphs">TDI</text>
<text x="52.6" y="480" textLength="9.7" lengthAdjust="spacingAndGlyphs">of</text>
<text x="67.2" y="480" textLength="10.8" lengthAdjust="spacingAndGlyphs">rsi</text>
<text x="86.3" y="480" textLength="23.3" lengthAdjust="spacingAndGlyphs">(14,</text>
<text x="113.2" y="480" textLength="39.4" lengthAdjust="spacingAndGlyphs">smooth</text>
<text x="158.4" y="480" textLength="24.1" lengthAdjust="spacingAndGlyphs">type</text>
<text x="187.2" y="480" textLength="2.0" lengthAdjust="spacingAndGlyphs">:</text>
<text x="199" y="480" textLength="23.8" lengthAdjust="spacingAndGlyphs">SMA</text>
<text x="227.5" y="480" textLength="8.5" lengthAdjust="spacingAndGlyphs">2,</text>
<text x="242" y="480" textLength="17.6" lengthAdjust="spacingAndGlyphs">14)</text>
<text x="265.2" y="480" textLength="44.6" lengthAdjust="spacingAndGlyphs">60.0000</text>
<text x="314.8" y="480" textLength="44.6" lengthAdjust="spacingAndGlyphs">40.0000</text>
<text x="364.7" y="480" textLength="44.6" lengthAdjust="spacingAndGlyphs">50.0000</text>
<text x="414.9" y="480" textLength="44.6" lengthAdjust="spacingAndGlyphs">62.4676</text>
<text x="464.8" y="480" textLength="44.6" lengthAdjust="spacingAndGlyphs">58.4927</text>
<text x="514.9" y="480" textLength="44.6" lengthAdjust="spacingAndGlyphs">54.5178</text>
<text x="564.8" y="480" textLength="44.6" lengthAdjust="spacingAndGlyphs">54.7460</text>
<text x="614.8" y="480" textLength="44.6" lengthAdjust="spacingAndGlyphs">54.7460</text>
<text x="664.9" y="480" textLength="44.6" lengthAdjust="spacingAndGlyphs">61.9321</text>
<rect x="1460.5" y="20.5" width="39" height="19" rx="1.5" fill="#0000e6" stroke="#f5efe0" stroke-width="1"/>
<text x="1463.2" y="34.7" style="font-size:13px" textLength="31.5" lengthAdjust="spacingAndGlyphs">Show</text>
<path transform="translate(144.5,86.5)" d="M0 0V16.2L3.9 12.6L6.9 18.6L9.4 17.4L6.5 11.6H11.3Z" fill="#fff" stroke="#000" stroke-width="1" stroke-linejoin="miter"/>
</svg>
<div class="a" style="left:0;top:688px;width:1592px;height:2px;background:#fff"></div>
<div class="a" style="left:0;top:690px;width:1592px;height:1px;background:#000"></div>
<div class="a" style="left:0;top:691px;width:1592px;height:23px;background:#f0f0f0"></div>
<div class="a" style="left:0;top:691px;width:1px;height:23px;background:#000"></div>
<div class="a" style="left:0;top:714px;width:1592px;height:1px;background:#f8f8f8"></div>
<div class="a" style="left:0;top:715px;width:1592px;height:1px;background:#fff"></div>
<div class="a" style="left:0;top:716px;width:1592px;height:7px;background:#f0f0f0"></div>
<div class="a" style="left:0;top:720px;width:1588px;height:1px;background:#a0a0a0"></div>
<div class="a" style="left:0;top:721px;width:1565px;height:2px;background:#fdfdfd"></div>
<div class="a" style="left:1565px;top:721px;width:1px;height:2px;background:#b8b8b8"></div>
<div class="a" style="left:346px;top:690px;width:92px;height:24px;background:rgba(0,0,0,.45)"></div>
<div class="a" style="left:346px;top:690px;width:92px;height:23px;background:#000"></div>
<div class="a" style="left:347px;top:690px;width:1px;height:22px;background:#777"></div>
<div class="a" style="left:348px;top:690px;width:89px;height:22px;background:#fff"></div>
<div class="tab" style="left:20.3px"><span style="transform:translateY(.6px) scaleX(0.7883)">GBPJPY,M1</span></div>
<div class="tab" style="left:120.2px"><span style="transform:translateY(.6px) scaleX(0.8474)">GERMANY40,H1</span></div>
<div class="tab" style="left:255px"><span style="transform:translateY(.6px) scaleX(0.8196)">GBPUSD,H1</span></div>
<div class="tab" style="left:360.3px"><span style="color:#000;transform:translateY(.6px) scaleX(0.8506)">GOLD,M5</span></div>
<div class="tab" style="left:452.8px"><span style="transform:translateY(.6px) scaleX(0.8315)">EURUSD,M30</span></div>
<div class="tab" style="left:568.3px"><span style="transform:translateY(.6px) scaleX(0.8536)">USDCHF,M15</span></div>
<div class="tab" style="left:683.4px"><span style="transform:translateY(.6px) scaleX(0.8566)">GERMANY40,M15</span></div>
<div class="tab" style="left:828.2px"><span style="transform:translateY(.6px) scaleX(0.8372)">EURUSD,M15</span></div>
<div class="tab" style="left:943.2px"><span style="transform:translateY(.6px) scaleX(0.8580)">GERMANY40,M15</span></div>
<div class="sep" style="left:106px"></div>
<div class="sep" style="left:242px"></div>
<div class="sep" style="left:554px"></div>
<div class="sep" style="left:670px"></div>
<div class="sep" style="left:814px"></div>
<div class="sep" style="left:931px"></div>
<div class="sep" style="left:1074px"></div>
<svg width="40" height="12" style="left:1550px;top:695px"><path d="M7 1.5V10L2 5.75z" fill="#a0a0a0"/><path d="M27 1.5V10L32 5.75z" fill="#a0a0a0"/></svg>
</body></html>
